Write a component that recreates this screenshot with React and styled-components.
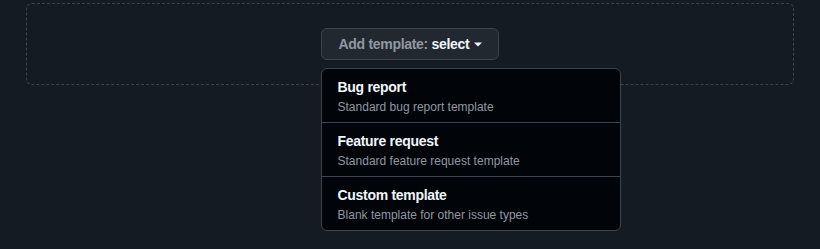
import React from "react";
import styled, { createGlobalStyle } from "styled-components";

const Global = createGlobalStyle`
  html, body {
    margin: 0;
    padding: 0;
    background: #151b23;
    font-family: "Liberation Sans", Arial, sans-serif;
  }
  * { box-sizing: border-box; }
`;

const Page = styled.div`
  width: 820px;
  height: 249px;
  padding: 3px 26px 0;
  background: #151b23;
`;

const DropZone = styled.div`
  border: 1px dashed #3d444d;
  border-radius: 6px;
  padding: 24px 0;
  display: flex;
  justify-content: center;
`;

const Anchor = styled.div`
  position: relative;
`;

const Trigger = styled.button`
  display: flex;
  align-items: center;
  gap: 5px;
  height: 32px;
  padding: 0 16px 0 17px;
  background: #212830;
  border: 1px solid #3d444d;
  border-radius: 6px;
  font-family: inherit;
  font-size: 14px;
  font-weight: 700;
  letter-spacing: -0.3px;
  color: #9198a1;
  cursor: pointer;
`;

const Value = styled.span`
  color: #f0f6fc;
`;

const Menu = styled.ul`
  position: absolute;
  top: 40px;
  left: 0;
  width: 300px;
  margin: 0;
  padding: 0;
  list-style: none;
  background: #010409;
  border: 1px solid #3d444d;
  border-radius: 6px;
  overflow: hidden;
  z-index: 2;
`;

const Item = styled.li`
  box-sizing: content-box;
  height: 44px;
  padding: 9px 16px 0;
  border-top: ${(p) => (p.$first ? "none" : "1px solid #3d444d")};
`;

const Title = styled.div`
  font-size: 14px;
  font-weight: 700;
  letter-spacing: -0.3px;
  line-height: 18px;
  color: #f0f6fc;
`;

const Desc = styled.div`
  margin-top: 2px;
  font-size: 12px;
  line-height: 18px;
  color: #9198a1;
`;

const Caret = () => (
  <svg width="8" height="16" viewBox="0 0 8 16" aria-hidden="true">
    <path d="M0 6.5h8L4 10.5z" fill="#f0f6fc" />
  </svg>
);

const templates = [
  { title: "Bug report", desc: "Standard bug report template" },
  { title: "Feature request", desc: "Standard feature request template" },
  { title: "Custom template", desc: "Blank template for other issue types" },
];

export default function App() {
  return (
    <>
      <Global />
      <Page>
        <DropZone>
          <Anchor>
            <Trigger>
              <span>
                Add template: <Value>select</Value>
              </span>
              <Caret />
            </Trigger>
            <Menu>
              {templates.map((t, i) => (
                <Item key={t.title} $first={i === 0}>
                  <Title>{t.title}</Title>
                  <Desc>{t.desc}</Desc>
                </Item>
              ))}
            </Menu>
          </Anchor>
        </DropZone>
      </Page>
    </>
  );
}
